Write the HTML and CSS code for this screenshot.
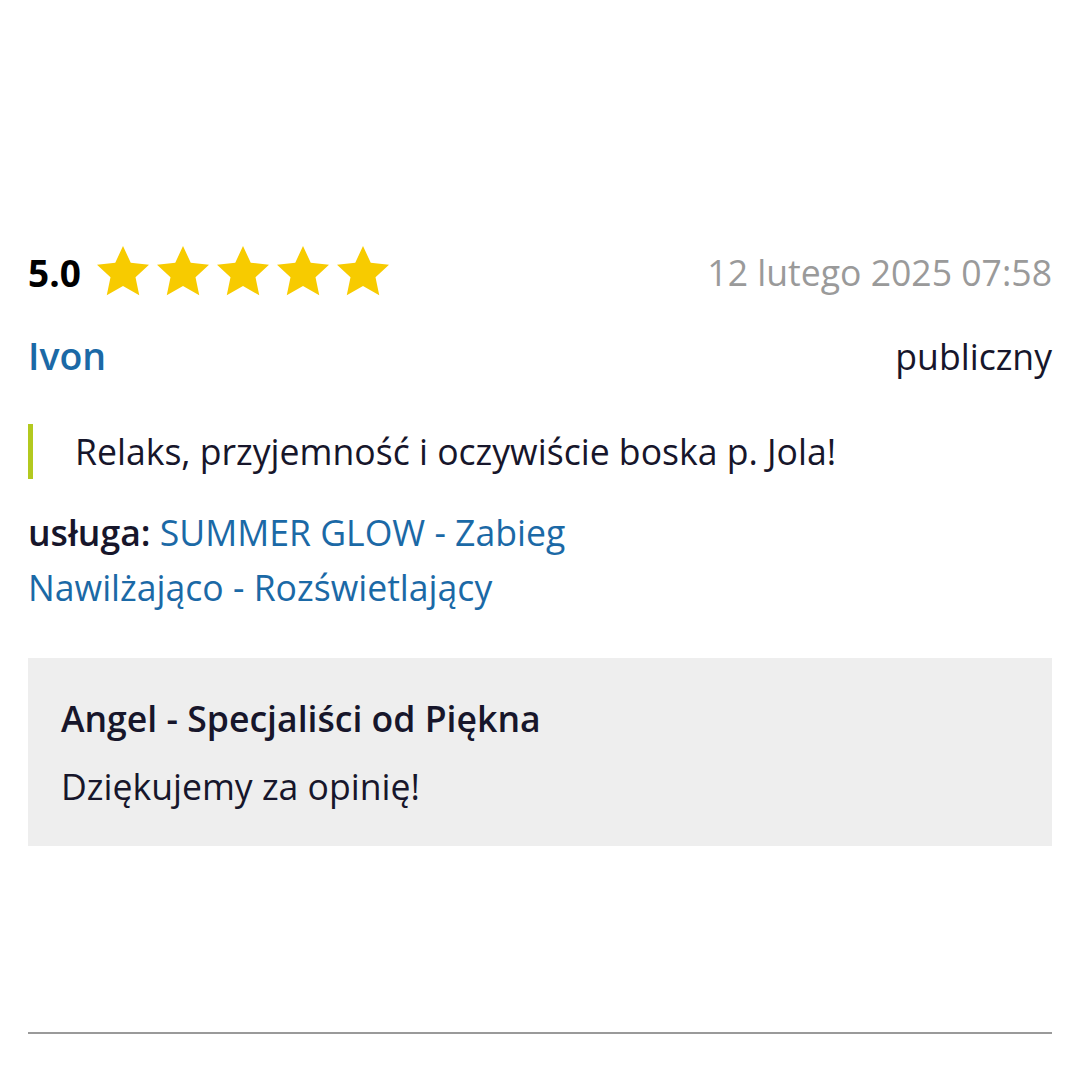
FILE: index.html
```html
<!DOCTYPE html>
<html lang="pl">
<head>
    <meta charset="UTF-8">
    <title>opinia</title>
    <link rel="stylesheet" href="styles.css">
</head>
<body>
    <div class="review">
        <div class="review-top">
            <div class="rating">
                <span class="rating-value">5.0</span>
                <div class="stars">
                    <svg class="star" viewBox="0 0 24 24"><path d="M12 1.6l3.1 6.7 7.3.8-5.4 5 1.5 7.2L12 17.6l-6.5 3.7L7 14.1l-5.4-5 7.3-.8z"/></svg>
                    <svg class="star" viewBox="0 0 24 24"><path d="M12 1.6l3.1 6.7 7.3.8-5.4 5 1.5 7.2L12 17.6l-6.5 3.7L7 14.1l-5.4-5 7.3-.8z"/></svg>
                    <svg class="star" viewBox="0 0 24 24"><path d="M12 1.6l3.1 6.7 7.3.8-5.4 5 1.5 7.2L12 17.6l-6.5 3.7L7 14.1l-5.4-5 7.3-.8z"/></svg>
                    <svg class="star" viewBox="0 0 24 24"><path d="M12 1.6l3.1 6.7 7.3.8-5.4 5 1.5 7.2L12 17.6l-6.5 3.7L7 14.1l-5.4-5 7.3-.8z"/></svg>
                    <svg class="star" viewBox="0 0 24 24"><path d="M12 1.6l3.1 6.7 7.3.8-5.4 5 1.5 7.2L12 17.6l-6.5 3.7L7 14.1l-5.4-5 7.3-.8z"/></svg>
                </div>
            </div>
            <span class="review-date">12 lutego 2025 07:58</span>
        </div>

        <div class="review-author">
            <a href="#" class="author-name">Ivon</a>
            <span class="visibility">publiczny</span>
        </div>

        <blockquote class="review-text">Relaks, przyjemność i oczywiście boska p. Jola!</blockquote>

        <p class="review-service">
            <b>usługa:</b> <a href="#">SUMMER GLOW - Zabieg Nawilżająco - Rozświetlający</a>
        </p>

        <div class="reply">
            <h3 class="reply-title">Angel - Specjaliści od Piękna</h3>
            <p class="reply-text">Dziękujemy za opinię!</p>
        </div>
    </div>
    <hr class="divider">
</body>
</html>
```

FILE: styles.css
```css
body {
    font-family: "Open Sans", "Noto Sans", sans-serif;
    font-size: 35.6px;
    color: #17162b;
    margin: 0;
    padding: 0 28px;
    background-color: #fff;
}
a {
    color: #1b69a6;
    text-decoration: none;
}
.review {
    padding-top: 241px;
}
.review-top {
    display: flex;
    justify-content: space-between;
    align-items: center;
    height: 62px;
}
.rating {
    display: flex;
    align-items: center;
    gap: 12px;
}
.rating-value {
    font-size: 37px;
    font-weight: 700;
    color: #000;
}
.stars {
    display: flex;
}
.star {
    width: 60px;
    height: 60px;
    fill: #f7cb00;
}
.review-date {
    color: #9a9a9a;
}
.review-author {
    display: flex;
    justify-content: space-between;
    align-items: center;
    margin-top: 29px;
    line-height: 48px;
}
.author-name {
    font-size: 37.5px;
    font-weight: 600;
}
.review-text {
    margin: 44px 0 0;
    padding: 4px 0 4px 42px;
    border-left: 5px solid #b3c91f;
    line-height: 47px;
}
.review-service {
    margin: 26px 0 0;
    max-width: 600px;
    line-height: 55px;
}
.review-service b {
    font-weight: 600;
}
.reply {
    margin-top: 43px;
    background-color: #eeeeee;
    padding: 38px 33px;
}
.reply-title {
    margin: 0;
    font-size: 35.6px;
    font-weight: 600;
    line-height: 44px;
}
.reply-text {
    margin: 24px 0 0;
    line-height: 44px;
}
.divider {
    border: none;
    border-top: 2px solid #9a9a9a;
    margin: 186px 0 0;
}
```
